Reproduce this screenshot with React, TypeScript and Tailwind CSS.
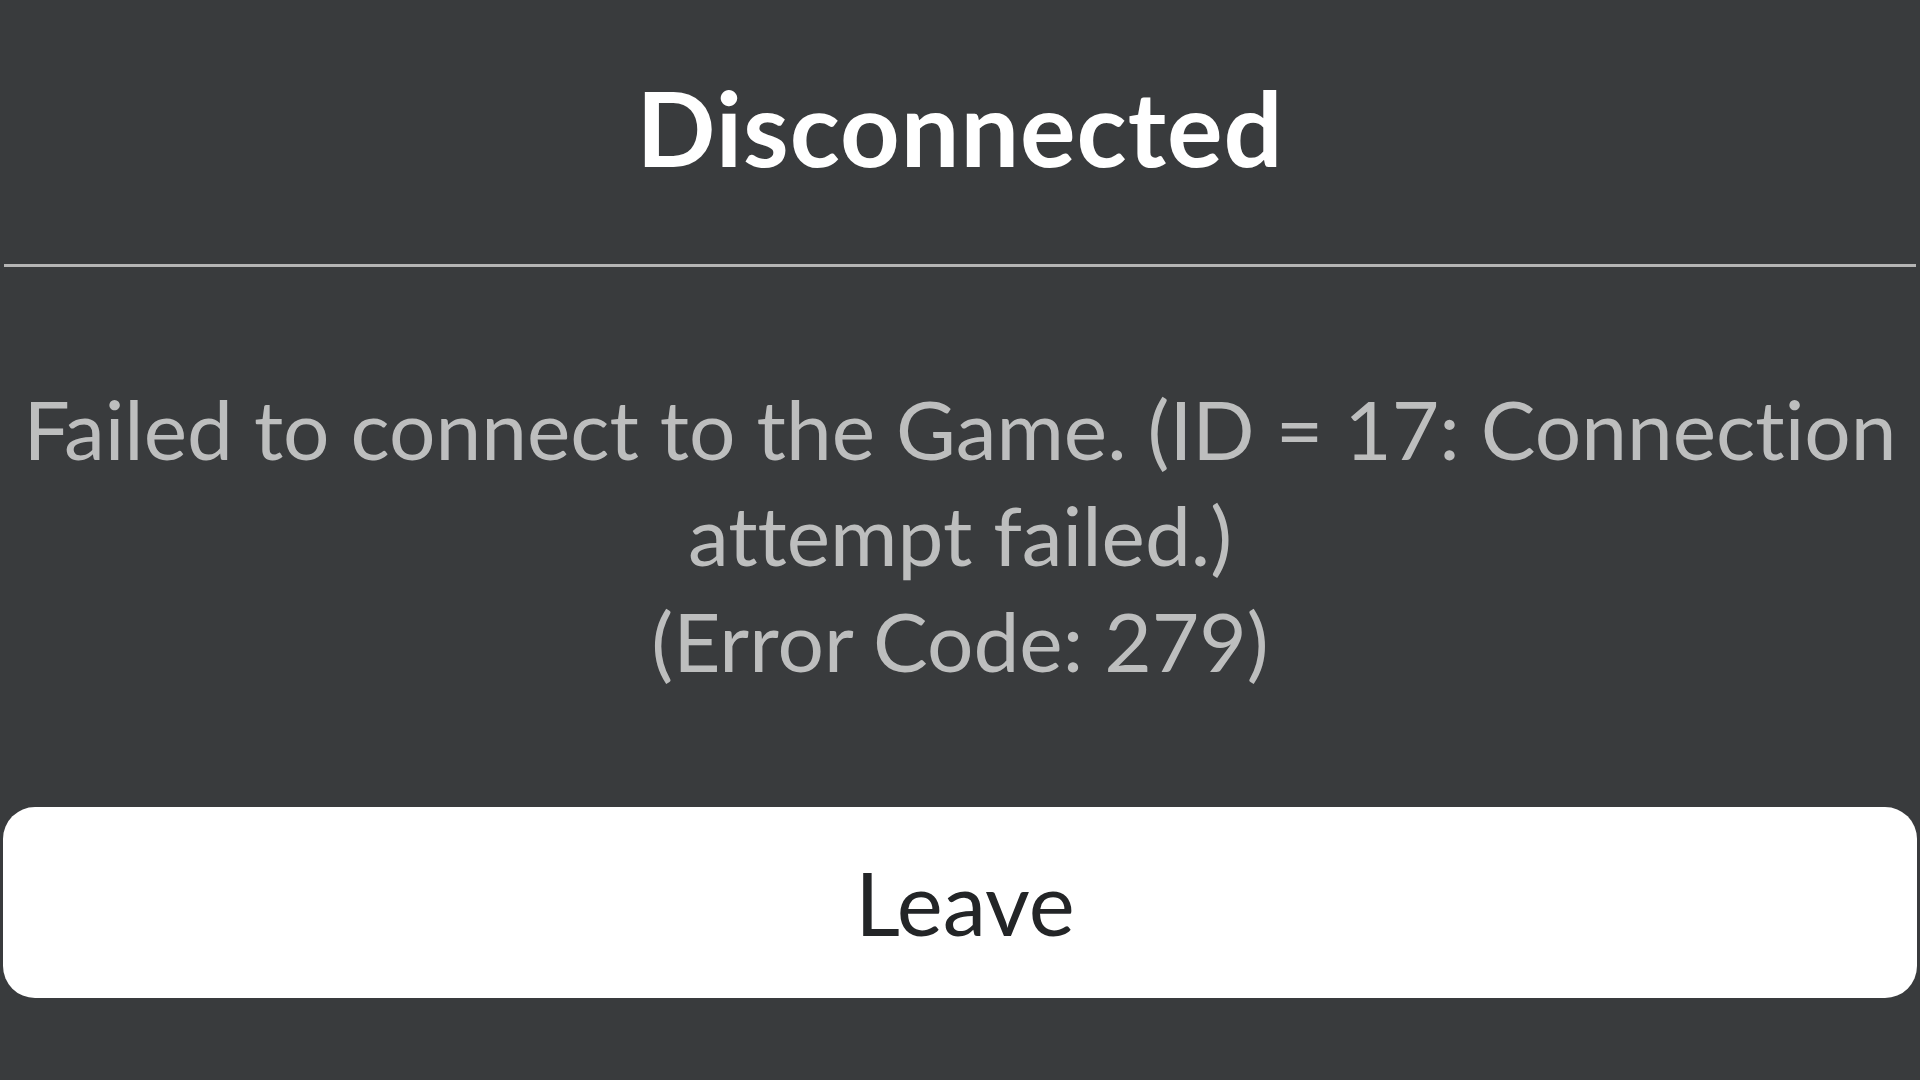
export default function App() {
  return (
    <div className="w-[1920px] h-[1080px] overflow-hidden bg-[#393b3d] flex flex-col font-['Lato',sans-serif] [font-variant-ligatures:none]">
      <header className="pt-[75px] h-[264px]">
        <h1 className="text-center text-white font-bold text-[104px] leading-[104px] tracking-[1px]">
          Disconnected
        </h1>
      </header>
      <div className="h-[3px] mx-[4px] bg-[#b5b5b5]" />

      <main className="mt-[108px] flex flex-col items-center text-[#bdbebe] text-[82px] leading-[106px]">
        <p className="whitespace-nowrap">Failed to connect to the Game. (ID = 17: Connection</p>
        <p className="whitespace-nowrap">attempt failed.)</p>
        <p className="whitespace-nowrap">(Error Code: 279)</p>
      </main>

      <div className="mt-[114px] px-[3px]">
        <button className="w-full h-[191px] rounded-[32px] bg-white flex items-center justify-center pl-[10px] text-[#232527] text-[87px] leading-none">
          Leave
        </button>
      </div>
    </div>
  );
}
